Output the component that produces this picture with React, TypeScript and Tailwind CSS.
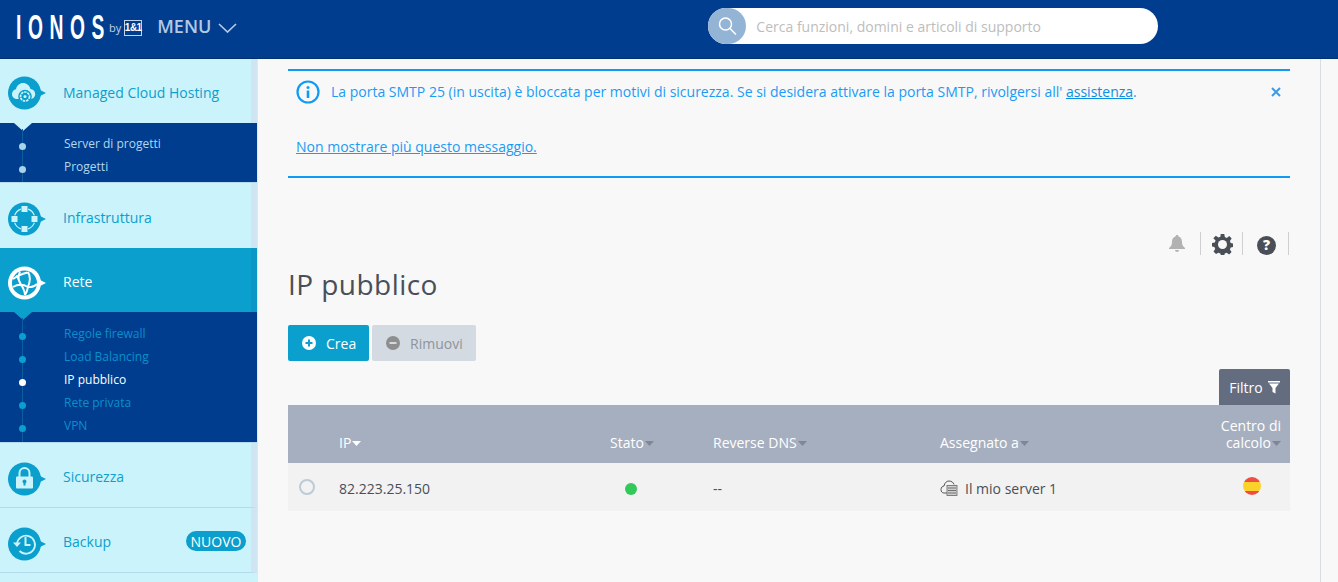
import React from "react";

const Caret = ({ light }: { light?: boolean }) => (
  <svg width="9" height="5" viewBox="0 0 9 5" className="inline-block ml-[1px] mb-[2px]">
    <path d="M0 0h9L4.500 5z" fill={light ? "#ffffff" : "#7f8796"} />
  </svg>
);

const Bubble = ({ active, children }: { active?: boolean; children: React.ReactNode }) => {
  const c = active ? "#ffffff" : "#0b9fcd";
  const f = active ? "#0b9fcd" : "#cbf3fb";
  return (
    <svg width="46" height="36" viewBox="0 0 46 36" className="block">
      <circle cx="16.500" cy="18" r="16.500" fill={c} />
      <path d="M31 14.500L38 18l-7 3.500z" fill={c} />
      <g fill={f} stroke={f}>{children}</g>
    </svg>
  );
};

const CloudIcon = () => (
  <>
    <path stroke="none" d="M9 24c-3 0-5-2.300-5-5 0-2.500 1.800-4.500 4-4.800C8.800 10.500 11.800 8 15 8c3.600 0 6.500 2.500 7.500 6 2.700.2 4.700 2.300 4.700 5 0 2.700-2 5-4.700 5z" />
    <circle cx="17" cy="21.500" r="6.800" fill="#0b9fcd" stroke="none" />
    <circle cx="17" cy="21.500" r="4.500" fill="none" strokeWidth="1.700" strokeDasharray="2.500 0.800" />
    <circle cx="17" cy="21.500" r="1.500" stroke="none" />
  </>
);

const InfraIcon = () => (
  <>
    <rect x="13.500" y="5" width="6" height="6" stroke="none" />
    <rect x="13.500" y="25" width="6" height="6" stroke="none" />
    <rect x="3.500" y="15" width="6" height="6" stroke="none" />
    <rect x="23.500" y="15" width="6" height="6" stroke="none" />
    <path fill="none" strokeWidth="1.200" d="M20.100 8.130A10.500 10.500 0 0 1 26.370 14.400M26.370 21.600A10.500 10.500 0 0 1 20.100 27.870M12.900 27.870A10.500 10.500 0 0 1 6.630 21.600M6.630 14.400A10.500 10.500 0 0 1 12.900 8.130" />
  </>
);

const GlobeIcon = () => (
  <>
    <circle cx="16.500" cy="18" r="12.500" stroke="none" />
    <path fill="none" stroke="#ffffff" strokeWidth="1.900" d="M5 14c4-3 9-5 14.500-6.500M5 22c5-3 10-3 15 0M12 6.500c-2.500 5-1.500 11 3 16.500 1 2 2 4 2 7M20 7c2.500 4 2 10 0 15 3 .5 6 0 9-3M20 22c-.5 3-1.500 5.500-3 8M9 10c1 4 3 8 6 13" />
  </>
);

const LockIcon = () => (
  <>
    <path fill="none" strokeWidth="2" d="M11.500 16v-4a5 5 0 0 1 10 0v4" />
    <rect x="8" y="15.500" width="17" height="12" rx="1" stroke="none" />
    <circle cx="16.500" cy="20.500" r="2" fill="#0b9fcd" stroke="none" />
    <rect x="15.500" y="20.500" width="2" height="4" fill="#0b9fcd" stroke="none" />
  </>
);

const BackupIcon = () => (
  <>
    <path fill="none" strokeWidth="1.800" d="M9 18a9 9 0 1 1 2.500 7" />
    <path stroke="none" d="M5 16.500h8l-4 4.500z" />
    <path fill="none" strokeWidth="2" d="M17.500 11v8h5" />
  </>
);

const Sub = ({ items, tone, pad }: { items: { t: string; on?: boolean }[]; tone: string; pad: string }) => (
  <div className={`relative bg-[#003d8f] ${pad} border-b border-[#b5dbea]`}>
    <div className="absolute left-[14px] top-0 w-0 h-0 border-l-[9px] border-r-[9px] border-t-[8px] border-l-transparent border-r-transparent" style={{ borderTopColor: tone }} />
    <div className="absolute left-[22px] top-[6px] bottom-0 w-px bg-[#0b5f9e]" />
    {items.map((i) => (
      <div key={i.t} className={`relative flex h-[23px] items-center text-[12px] ${i.on ? "text-white" : tone === "#cbf3fb" ? "text-[#b3d7ee]" : "text-[#0b8fca]"}`}>
        <span className={`absolute left-[19px] top-[11px] w-[7px] h-[7px] rounded-full ${i.on ? "bg-white" : tone === "#cbf3fb" ? "bg-[#a6d2ea]" : "bg-[#0b9fcd]"}`} />
        <span className="pl-[64px]">{i.t}</span>
      </div>
    ))}
  </div>
);

const Nav = ({ label, active, icon, badge, h, line = false, iconTop, labelTop = "mt-[24px]" }: { label: string; active?: boolean; icon: React.ReactNode; badge?: boolean; h: string; line?: boolean; iconTop: string; labelTop?: string }) => (
  <div className={`flex items-start ${h} ${active ? "bg-[#0b9fcd] text-white border-r-[6px] border-r-[#0d97c7]" : "bg-[#cbf3fb] text-[#0b9fcd] border-r-[6px] border-r-[#cfe5f3]"} ${line ? "border-b border-b-[#b5dbea]" : ""} text-[14px]`}>
    <div className={`shrink-0 ml-[8px] ${iconTop}`}>
      <Bubble active={active}>{icon}</Bubble>
    </div>
    <span className={`ml-[9px] leading-[20px] ${labelTop}`}>{label}</span>
    {badge && <span className="ml-auto mr-[5px] mt-[23px] h-[20px] w-[60px] flex items-center justify-center rounded-full bg-[#0b9fcd] text-white text-[14px]">NUOVO</span>}
  </div>
);

export default function App() {
  return (
    <div className="w-[1338px] h-[582px] overflow-hidden bg-[#f8f8f8] text-[#4a4f57] flex flex-col" style={{ fontFamily: '"Open Sans", sans-serif' }}>
      <header className="h-[59px] shrink-0 bg-[#003d8f] flex items-start border-b border-[#00306f]">
        <div className="flex items-center h-[52px] pl-[16px]">
          <span className="text-white text-[35px] font-bold leading-none tracking-[12px] inline-block w-[89px] whitespace-nowrap" style={{ fontFamily: '"Liberation Sans", sans-serif', transform: "scaleX(0.55)", transformOrigin: "left center" }}>IONOS</span>
          <span className="text-[#c3d3e6] text-[11px] ml-[4px] mt-[5px]">by</span>
          <span className="ml-[3px] mt-[3px] border border-[#c3d3e6] text-white text-[10px] font-bold h-[16px] w-[18px] flex items-center justify-center leading-none tracking-[-0.5px]" style={{ fontFamily: '"Liberation Sans", sans-serif' }}>1&amp;1</span>
          <span className="ml-[15px] text-[#b3c8e3] text-[18px] font-semibold">MENU</span>
          <svg width="19" height="10" viewBox="0 0 19 10" className="ml-[7px] mt-[3px]"><path d="M1 1l8.500 8L18 1" fill="none" stroke="#b3c8e3" strokeWidth="1.700" /></svg>
        </div>
        <div className="ml-[471px] mt-[8px] w-[450px] h-[36px] bg-white rounded-full flex items-center relative">
          <span className="w-[38px] h-[36px] rounded-full bg-[#94b4d6] flex items-center justify-center">
            <svg width="20" height="20" viewBox="0 0 20 20"><circle cx="8.500" cy="8" r="6" fill="none" stroke="#fff" strokeWidth="1.500" /><path d="M13 12.500l6 6" stroke="#fff" strokeWidth="1.500" /></svg>
          </span>
          <span className="ml-[10px] text-[14px] text-[#bdbdbd]">Cerca funzioni, domini e articoli di supporto</span>
        </div>
      </header>
      <div className="flex flex-1 min-h-0">
        <aside className="w-[258px] shrink-0 border-r border-r-[#dfe8ee] bg-[#cbf3fb] overflow-hidden">
          <Nav label="Managed Cloud Hosting" icon={<CloudIcon />} h="h-[64px]" iconTop="mt-[16px]" />
          <Sub tone="#cbf3fb" pad="pt-[9px] pb-[4px]" items={[{ t: "Server di progetti" }, { t: "Progetti" }]} />
          <Nav label="Infrastruttura" icon={<InfraIcon />} h="h-[65px]" iconTop="mt-[18px]" labelTop="mt-[25px]" />
          <Nav label="Rete" active icon={<GlobeIcon />} h="h-[64px]" iconTop="mt-[17px]" />
          <Sub tone="#0b9fcd" pad="pt-[10px] pb-[5px]" items={[{ t: "Regole firewall" }, { t: "Load Balancing" }, { t: "IP pubblico", on: true }, { t: "Rete privata" }, { t: "VPN" }]} />
          <Nav label="Sicurezza" icon={<LockIcon />} h="h-[65px]" line iconTop="mt-[18px]" />
          <Nav label="Backup" icon={<BackupIcon />} badge h="h-[65px]" line iconTop="mt-[18px]" />
        </aside>
        <main className="w-[1063px] shrink-0 border-r border-r-[#d5dde5] pl-[30px] pr-[30px] pt-[10px]">
          <div className="border-t-2 border-b-2 border-[#0f9bf5] h-[109px] text-[#1a9bf5] text-[14px]">
            <div className="flex items-center h-[42px] pl-[8px] pr-[8px]">
              <svg width="24" height="24" viewBox="0 0 24 24" className="shrink-0 ml-0"><circle cx="12" cy="12" r="10.500" fill="none" stroke="#0f9bf5" strokeWidth="2.200" /><circle cx="12" cy="7.500" r="1.500" fill="#0f9bf5" /><rect x="10.700" y="10.500" width="2.600" height="7.500" fill="#0f9bf5" /></svg>
              <span className="ml-[11px] -translate-y-[1px]">La porta SMTP 25 (in uscita) è bloccata per motivi di sicurezza. Se si desidera attivare la porta SMTP, rivolgersi all' <span className="underline text-[#0b8fe0]">assistenza</span>.</span>
              <svg width="10" height="10" viewBox="0 0 10 10" className="ml-auto mr-[1px]"><path d="M1 1l8 8M9 1l-8 8" stroke="#3a9bea" strokeWidth="2" /></svg>
            </div>
            <div className="mt-[24px] pl-[8px] underline leading-[19px]">Non mostrare più questo messaggio.</div>
          </div>
          <div className="flex justify-end items-center h-[24px] mt-[53px] pr-[1px] text-[#4a4f57]">
            <div className="flex items-center justify-center w-[24px] mr-[11px]">
              <svg width="16" height="17" viewBox="0 0 16 17"><path d="M8 0c1 0 1.500.7 1.500 1.500C12 2.300 13 4.300 13 7c0 3 1 4.500 3 6v1H0v-1c2-1.500 3-3 3-6 0-2.700 1-4.700 3.500-5.500C6.500.7 7 0 8 0zM6 15h4c0 1-1 2-2 2s-2-1-2-2z" fill="#b2b2b2" /></svg>
            </div>
            <span className="w-px h-[23px] bg-[#cfcfcf]" />
            <div className="flex items-center justify-center w-[41px] pt-[3px] pl-[2px]">
              <svg width="21" height="21" viewBox="0 0 21 21"><path d="M8.700 0h3.600l.5 3 2 .9L17.300 2l2.400 2.600-1.800 2.500.8 2 2.800.5v3.300l-2.800.6-.8 2 1.700 2.400-2.500 2.500-2.400-1.700-2 .8-.5 2.800H9l-.6-2.800-2-.8L4 19.900l-2.500-2.500 1.700-2.400-.8-2-2.400-.6V9.100l2.800-.5.8-2L1.300 4.200 3.800 1.800 6.400 3.500l2-.8z" fill="#4a4f57" /><circle cx="10.500" cy="10.500" r="4.500" fill="#f8f8f8" /></svg>
            </div>
            <span className="w-px h-[23px] bg-[#cfcfcf]" />
            <div className="flex items-center justify-center w-[45px] pt-[4px] pl-[2px]">
              <span className="w-[19px] h-[19px] rounded-full bg-[#4a4f57] text-white text-[14px] font-extrabold flex items-center justify-center leading-none">?</span>
            </div>
            <span className="w-px h-[23px] bg-[#cfcfcf]" />
          </div>
          <h1 className="text-[28px] leading-[38px] mt-[10px] tracking-[0.45px] text-[#4a4f57]">IP pubblico</h1>
          <div className="flex mt-[22px] gap-[3px] text-[14px]">
            <button className="w-[81px] h-[36px] bg-[#0b9fcd] text-white rounded-[2px] flex items-center pl-[14px]">
              <svg width="14" height="14" viewBox="0 0 14 14"><circle cx="7" cy="7" r="7" fill="#fff" /><path d="M3.500 7h7M7 3.500v7" stroke="#0b9fcd" strokeWidth="2" /></svg>
              <span className="ml-[10px]">Crea</span>
            </button>
            <button className="w-[104px] h-[36px] bg-[#d4dae2] text-[#8e949c] rounded-[2px] flex items-center pl-[14px]">
              <svg width="14" height="14" viewBox="0 0 14 14"><circle cx="7" cy="7" r="7" fill="#8e8e8e" /><path d="M3.500 7h7" stroke="#d4dae2" strokeWidth="2" /></svg>
              <span className="ml-[10px]">Rimuovi</span>
            </button>
          </div>
          <div className="flex justify-end mt-[8px]">
            <div className="w-[71px] h-[36px] bg-[#646c80] rounded-t-[2px] text-white text-[14px] flex items-center justify-center gap-[5px]">
              Filtro
              <svg width="12" height="14" viewBox="0 0 12 14"><path d="M0 1h12v1.500H0zM1 3.500h10L7.500 8v5.500l-3-1.500V8z" fill="#fff" /></svg>
            </div>
          </div>
          <div className="grid grid-cols-[51px_271px_103px_227px_1fr_79px] text-[14px]">
            <div className="col-span-6 grid grid-cols-subgrid h-[58px] bg-[#a6afc0] text-white items-end pb-[11px] leading-[19px]">
              <span />
              <span>IP<Caret light /></span>
              <span>Stato<Caret /></span>
              <span>Reverse DNS<Caret /></span>
              <span>Assegnato a<Caret /></span>
              <span className="text-right pr-[9px] -ml-[20px] leading-[17px] mb-[1px]">Centro di<br />calcolo<Caret /></span>
            </div>
            <div className="col-span-6 grid grid-cols-subgrid h-[48px] bg-[#f2f2f2] items-center">
              <span className="w-[16px] h-[16px] rounded-full border-2 border-[#bccbd8] ml-[11px] mb-[1px]" />
              <span className="mt-[2px]">82.223.25.150</span>
              <span className="pl-[15px] mt-[4px]"><span className="block w-[12px] h-[12px] rounded-full bg-[#33c85a]" /></span>
              <span className="mt-[2px]">--</span>
              <span className="flex items-center mt-[2px]">
                <svg width="18" height="16" viewBox="0 0 18 16"><path d="M7 13H4C2 13 1 11.500 1 9.500 1 7.500 2.500 6 4 6 4.500 3 6.500 1 9 1c2.500 0 4.500 1.500 5 3.500" fill="none" stroke="#555" strokeWidth="1" /><rect x="7" y="5.500" width="10" height="10" fill="#cfcfcf" stroke="#666" strokeWidth=".8" /><path d="M8 8h8M8 10.500h8M8 13h8" stroke="#666" strokeWidth=".9" /></svg>
                <span className="ml-[7px]">Il mio server 1</span>
              </span>
              <span className="pl-[32px]">
                <span className="block w-[18px] h-[18px] rounded-full overflow-hidden mb-[3px]" style={{ background: "linear-gradient(#f04d45 0 25%, #fbd22a 25% 75%, #f04d45 75%)" }} />
              </span>
            </div>
          </div>
        </main>
      </div>
    </div>
  );
}
